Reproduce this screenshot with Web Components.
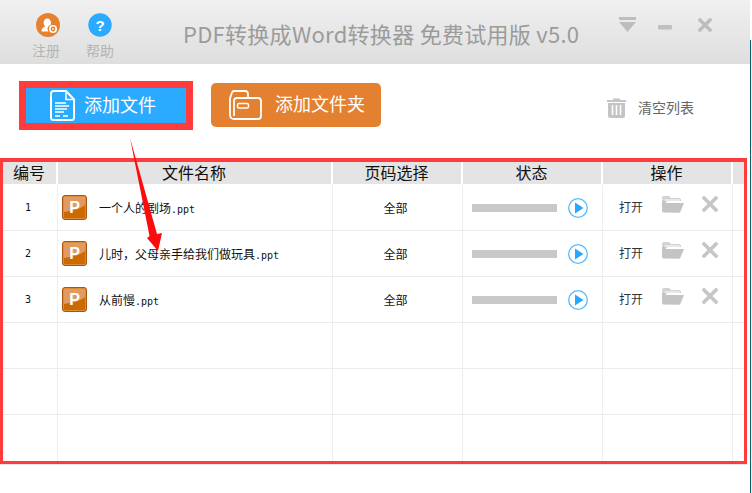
<!DOCTYPE html>
<html lang="zh-CN"><head><meta charset="utf-8"><title>PDF转换成Word转换器</title>
<style>html,body{margin:0;padding:0;background:#fff}</style></head>
<body>
<pdf-app></pdf-app>
<script>
const FONT = '"Noto Sans CJK SC","Noto Sans",sans-serif';
const ICONS = {
  user:`<svg width="24" height="24" viewBox="0 0 24 24"><circle cx="12" cy="12" r="12" fill="#e6812f"/><path d="M5.500 18.500c0-3.200 2-4.400 3.800-5-1.200-1-1.700-2.300-1.700-3.700 0-2.300 1.600-4.300 3.700-4.300s3.700 2 3.700 4.300c0 .8-.2 1.500-.5 2.100-1.800.5-3 2.100-3 3.900 0 1 .3 1.900.9 2.700z" fill="#fff"/><circle cx="17" cy="16" r="3.200" fill="none" stroke="#fff" stroke-width="1.600"/><circle cx="17" cy="16" r=".9" fill="#fff"/></svg>`,
  help:`<svg width="24" height="24" viewBox="0 0 24 24"><circle cx="12" cy="12" r="11.700" fill="#2aabff"/><text x="12" y="17.500" text-anchor="middle" font-family="Liberation Sans" font-weight="700" font-size="15" fill="#fff">?</text></svg>`,
  menu:`<svg width="17" height="15" viewBox="0 0 17 15"><path d="M0 0h17v3H0zM0 5h17l-8.500 10z" fill="#bdbdbd"/></svg>`,
  min:`<svg width="14" height="5" viewBox="0 0 14 5"><rect width="14" height="4.500" rx="1" fill="#c0c0c0"/></svg>`,
  close:`<svg width="14" height="14" viewBox="0 0 14 14"><path d="M2 2l10 10M12 2L2 12" stroke="#bdbdbd" stroke-width="3.400" stroke-linecap="square"/></svg>`,
  doc:`<svg width="25" height="31" viewBox="0 0 25 31" fill="none" stroke="#fff"><path d="M3.500 1H16l8 8.500V27.500a2.500 2.500 0 0 1-2.500 2.500h-18A2.500 2.500 0 0 1 1 27.500v-24A2.500 2.500 0 0 1 3.500 1z" stroke-width="2"/><path d="M16 1.500V9.500h8" stroke-width="1.500"/><path d="M5 13h11M5 16h14M5 19h12M5 22h9" stroke-width="1.300"/><path d="M5 26h5M13 26h5" stroke-width="1.300"/></svg>`,
  folderbig:`<svg width="33" height="30" viewBox="0 0 33 30" fill="none" stroke="#fff" stroke-width="1.800"><path d="M5 29A4 4 0 0 1 1 25V8.500L3 2.500A2.500 2.500 0 0 1 5.500 1H16a3 3 0 0 1 3 3V8"/><path d="M5 26V11a3 3 0 0 1 3-3H29a3 3 0 0 1 3 3V26a3 3 0 0 1-3 3H5"/><rect x="8.500" y="13.500" width="11" height="4.500" rx="1.500" stroke-width="1.500"/></svg>`,
  trash:`<svg width="19" height="21" viewBox="0 0 19 21"><path d="M6 1.500h7V3h5.500a.5.500 0 0 1 .5.500V5H0V3.500a.5.500 0 0 1 .5-.5H6z" fill="#c4c4c4"/><path d="M1 6h17v13a2 2 0 0 1-2 2H3a2 2 0 0 1-2-2z" fill="#c4c4c4"/><path d="M5.500 8v10M9.500 8v10M13.500 8v10" stroke="#fff" stroke-width="1.500"/></svg>`,
  ppt:`<svg width="25" height="25" viewBox="0 0 25 25"><rect x=".5" y=".5" width="24" height="24" rx="2.500" fill="#cc6a00" stroke="#a85510"/><path d="M2 2h21v8c-5 4-13 6-21 7z" fill="#e29a60"/><rect x="1.500" y="1.500" width="22" height="22" rx="1.500" fill="none" stroke="#f0c090" stroke-opacity=".4"/><text x="12.500" y="18" text-anchor="middle" font-family="Liberation Sans" font-weight="700" font-size="16" fill="#fff">P</text></svg>`,
  play:`<svg width="20" height="20" viewBox="0 0 20 20"><circle cx="10" cy="10" r="9.300" fill="#fff" stroke="#56bdff" stroke-width="1.300"/><path d="M7 4.500L15.500 10 7 15.500z" fill="#2aa6fa"/></svg>`,
  folder:`<svg width="22" height="17" viewBox="0 0 22 17"><path d="M0 2a2 2 0 0 1 2-2h5l2 2h8a2 2 0 0 1 2 2v1H5.500L2 9z" fill="#d2d2d2"/><path d="M1 16.500L0 15V5.500a1.500 1.500 0 0 1 1.500-1.500H3v3h16.500L22 7l-3.500 8.500a2 2 0 0 1-1.800 1.300z" fill="#c4c4c4"/><path d="M2.500 4h15" stroke="#fff" stroke-width="1"/></svg>`,
  del:`<svg width="16" height="16" viewBox="0 0 16 16"><path d="M2 2l12 12M14 2L2 14" stroke="#c6c6c6" stroke-width="3.600" stroke-linecap="square"/></svg>`
};
function def(name, css, html, extra){
  customElements.define(name, class extends HTMLElement{
    constructor(){super();const r=this.attachShadow({mode:'open'});
      r.innerHTML=`<style>${css}</style>`+(typeof html==='function'?html(this):html);}
    connectedCallback(){ if(extra) extra(this); }
  });
}
def('app-icon',':host{display:inline-flex;line-height:0}','<span id="i"></span>',el=>{el.shadowRoot.getElementById('i').innerHTML=ICONS[el.getAttribute('name')]||'';});

def('title-item',`:host{display:flex;flex-direction:column;align-items:center;width:40px;font:14px/1 ${FONT};color:#b4b4b4}
 span{display:block;margin-top:6px}`,'<slot name="icon"></slot><span><slot></slot></span>');

def('title-bar',`:host{display:flex;height:64px;box-sizing:border-box;padding:13px 0 0 26px;background:linear-gradient(#f0f0f0,#dedede);font-family:${FONT}}
 .items{display:flex;gap:14px}
 h1{margin:7px 0 0 63px;font-size:22px;line-height:26px;font-weight:400;letter-spacing:.28px;color:#9b9b9b;white-space:nowrap;flex:none;width:397px}
 .ctl{display:flex;align-items:flex-start;margin-left:39px}
 .ctl app-icon:nth-child(1){margin-top:4px}
 .ctl app-icon:nth-child(2){margin:10px 0 0 22px}
 .ctl app-icon:nth-child(3){margin:5px 0 0 26px}`,
 `<div class="items"><title-item><app-icon slot="icon" name="user" style="margin-left:3px"></app-icon>注册</title-item><title-item><app-icon slot="icon" name="help"></app-icon>帮助</title-item></div>
  <h1>PDF转换成Word转换器 免费试用版 v5.0</h1>
  <div class="ctl"><app-icon name="menu"></app-icon><app-icon name="min"></app-icon><app-icon name="close"></app-icon></div>`);

def('action-button',`:host{display:flex;align-items:center;box-sizing:border-box;color:#fff;font:18px/1 ${FONT};white-space:nowrap}
 span{display:block;margin-bottom:4px}
 :host([kind=file]){width:174px;height:49px;border:7px solid #ff3b3b;background:#2aabff;padding-left:24px;gap:9px}
 :host([kind=folder]){width:170px;height:44px;border-radius:5px;background:#e38130;padding-left:18px;gap:13px;margin:0 0 1px 18px}`,
 '<slot name="icon"></slot><span><slot></slot></span>');

def('tool-bar',`:host{display:flex;align-items:center;height:94px;box-sizing:border-box;padding:17px 0 28px 19px;font-family:${FONT}}
 .clear{display:flex;align-items:center;gap:12px;margin-left:226px;font-size:14px;line-height:1;color:#666}
 .clear span{margin-top:3px}.clear app-icon{margin-top:3px}`,
 `<action-button kind="file"><app-icon slot="icon" name="doc"></app-icon>添加文件</action-button>
  <action-button kind="folder"><app-icon slot="icon" name="folderbig"></app-icon>添加文件夹</action-button>
  <div class="clear"><app-icon name="trash"></app-icon><span>清空列表</span></div>`);

const COLS='55px 275px 130px 140px 130px 11px';
def('table-head',`:host{display:grid;grid-template-columns:${COLS};height:23px;font:16px/22px ${FONT};color:#111;background:#fff}
 div{background:#e4e4e4;margin-right:2px;padding-right:1px;box-sizing:border-box;height:22px;display:flex;align-items:center;justify-content:center}
 div span{display:block;margin-top:-2px}
 div:first-child{padding-right:5px}div:last-child{margin-right:0}`,
 '<div><span>编号</span></div><div><span>文件名称</span></div><div><span>页码选择</span></div><div><span>状态</span></div><div><span>操作</span></div><div></div>');

def('file-row',`:host{display:grid;grid-template-columns:${COLS};height:46px;box-sizing:border-box;border-bottom:1px solid #ececec;font:12px/1 ${FONT};color:#111}
 :host(:last-child){border-bottom:0}
 .c{display:flex;align-items:center;box-sizing:border-box;border-right:1px solid #eeeeee;min-width:0}
 .c:last-child{border-right:0}
 .n{justify-content:center;padding:1px 4px 0 0;font:10px/1 "DejaVu Sans Mono",monospace}
 .f{padding-left:4px;gap:12px;white-space:nowrap}
 .f span{margin-top:2px}
 .f b{font:400 10px/1 "DejaVu Sans Mono",monospace}
 .p{justify-content:center;padding-right:4px}
 .s{padding-left:9px}
 .bar{width:85px;height:8px;background:#c8c8c8;margin-right:11px}
 .o{padding-left:16px;color:#333}
 .o span{margin-bottom:2px}
 .o app-icon{margin-bottom:7px}`,
 el=>{const name=el.getAttribute('file');const num=el.getAttribute('num');
  if(!name) return '<div class="c"></div><div class="c"></div><div class="c"></div><div class="c"></div><div class="c"></div><div class="c"></div>';
  return `<div class="c n">${num}</div>
  <div class="c f"><app-icon name="ppt"></app-icon><span>${name}<b>.ppt</b></span></div>
  <div class="c p">全部</div>
  <div class="c s"><div class="bar"></div><app-icon name="play"></app-icon></div>
  <div class="c o"><span>打开</span><app-icon name="folder" style="margin-left:19px"></app-icon><app-icon name="del" style="margin-left:18px"></app-icon></div>
  <div class="c"></div>`;});

def('file-table',`:host{display:block;width:747px;box-sizing:border-box;border:3px solid #ff3b3b;border-top-width:4px;background:#fff;box-shadow:0 1px 0 #e6e6e6}`,
 `<table-head></table-head>
  <file-row num="1" file="一个人的剧场"></file-row>
  <file-row num="2" file="儿时，父母亲手给我们做玩具"></file-row>
  <file-row num="3" file="从前慢"></file-row>
  <file-row></file-row><file-row></file-row><file-row></file-row>`);

def('pdf-app',`:host{display:flex;position:relative;width:752px;height:493px;overflow:hidden;background:#fff;font-family:${FONT}}
 main{width:750px;flex:none}
 .edge{width:1px;margin-top:40px;background:#0f5f63}
 .arrow{position:absolute;left:0;top:0;pointer-events:none}`,
 `<main><title-bar></title-bar><tool-bar></tool-bar><file-table></file-table></main><div class="edge"></div>
  <svg class="arrow" width="752" height="493" viewBox="0 0 752 493"><polygon points="130,138 157,234 162,233 158,251 147,238 149.500,236" fill="#fb0d0d"/></svg>`);
</script>
</body></html>
